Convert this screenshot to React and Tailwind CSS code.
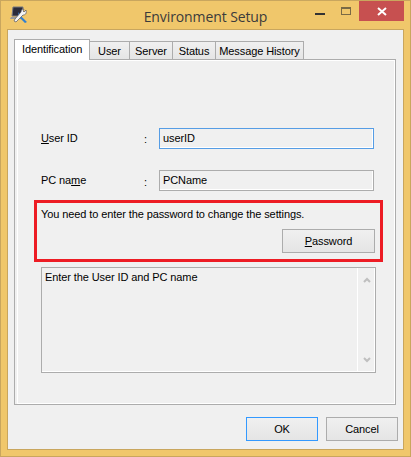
const tabs = [
  { label: 'User', width: 'w-[40px]' },
  { label: 'Server', width: 'w-[43px]' },
  { label: 'Status', width: 'w-[43px]' },
  { label: 'Message History', width: 'w-[88px]' },
];

const AppIcon = () => (
  <svg width="18" height="18" viewBox="0 0 18 18" className="mt-[5px] ml-[9px]">
    <path d="M3 1h10l-1 9H2z" fill="#2b2b3a" stroke="#77777f" strokeWidth="1" />
    <path d="M1 11h10l1 2H0z" fill="#9a9a9a" />
    <path d="M8 6l3 4 6 6-2 1-6-6z" fill="#2f7fd0" />
    <path d="M16 4l-2 2-1-1 1-2c-2 0-3 1-3 3l-6 7-1 2 2 1 7-7c2 0 4-1 3-5z" fill="#f4f4f4" stroke="#55555f" strokeWidth="0.7" />
  </svg>
);

const TitleBar = () => (
  <div className="grid grid-cols-[1fr_auto_1fr] h-[28px] shrink-0">
    <AppIcon />
    <div className="text-[14px] leading-[20px] pt-[6px] text-[#3b3b3b] font-['Open_Sans',sans-serif]">
      Environment Setup
    </div>
    <div className="flex justify-end items-start">
      <div className="w-[10px] h-[2px] mt-[12px] bg-[#333333]" />
      <div className="w-[10px] h-[8px] mt-[6px] ml-[16px] border border-[#7a6a45] border-t-2" />
      <div className="w-[45px] h-[20px] ml-[8px] mr-[6px] bg-[#C75050] flex items-center justify-center">
        <svg width="10" height="9" viewBox="0 0 10 9">
          <path d="M1 1l8 7M9 1L1 8" stroke="#ffffff" strokeWidth="2" />
        </svg>
      </div>
    </div>
  </div>
);

const Tabs = () => (
  <div className="flex items-end h-[20px] relative z-10">
    <div className="w-[76px] h-[21px] -mb-[1px] bg-white border border-b-0 border-[#ACACAC] pl-[7px] pt-[2px] leading-[14px]">
      Identification
    </div>
    {tabs.map((tab) => (
      <div
        key={tab.label}
        className={`${tab.width} h-[18px] border border-l-0 border-b-0 border-[#ACACAC] bg-gradient-to-b from-[#F0F0F0] to-[#E5E5E5] text-center pt-[2px] leading-[14px] whitespace-nowrap`}
      >
        {tab.label}
      </div>
    ))}
  </div>
);

const Field = ({ label, value, focused, colonClass }) => (
  <div className="flex items-center h-[21px]">
    <div className="w-[103px]">{label}</div>
    <div className={`w-[15px] ${colonClass}`}>:</div>
    <div
      className={`w-[215px] h-[21px] border ${focused ? 'border-[#569DE5]' : 'border-[#ACACAC]'} shadow-[inset_-1px_-1px_0_#ffffff] pl-[3px] leading-[18px]`}
    >
      {value}
    </div>
  </div>
);

const Chevron = ({ d }) => (
  <svg width="8" height="6" viewBox="0 0 8 6">
    <path d={d} fill="none" stroke="#BFBFBF" strokeWidth="2" />
  </svg>
);

export default function App() {
  return (
    <div className="w-[411px] h-[457px] bg-[#F0C76B] border border-[#C9A65E] flex flex-col text-[11px] tracking-[-0.1px] text-black font-['Liberation_Sans',sans-serif]">
      <TitleBar />
      <div className="ml-[6px] mr-[6px] mb-[6px] flex-1 border border-[#C9A65E] bg-[#F0F0F0] flex flex-col pl-[6px] pr-[7px] pt-[9px]">
        <Tabs />
        <div className="h-[346px] border border-[#ACACAC] pl-[2px]">
          <div className="h-full border border-white pl-[23px] pt-[67px]">
            <Field
              label={<><u>U</u>ser ID</>}
              value="userID"
              focused
              colonClass="mt-[1px]"
            />
            <div className="mt-[21px]">
              <Field
                label={<>PC na<u>m</u>e</>}
                value="PCName"
                colonClass="mt-[4px]"
              />
            </div>
            <div className="-ml-[7px] mt-[9px] w-[349px] h-[62px] border-[3px] border-[#ED1C24] flex flex-col pl-[4px] pr-[5px] pt-[4px]">
              <div className="leading-[14px]">You need to enter the password to change the settings.</div>
              <button className="self-end mt-[8px] w-[93px] h-[24px] border border-[#ACACAC] bg-gradient-to-b from-[#F0F0F0] to-[#E5E5E5]">
                <u>P</u>assword
              </button>
            </div>
            <div className="mt-[5px] w-[335px] h-[106px] border border-[#ACACAC] flex shadow-[inset_-1px_-1px_0_#ffffff]">
              <div className="flex-1 pl-[3px] pt-[2px] leading-[14px]">Enter the User ID and PC name</div>
              <div className="w-[18px] border-l border-white flex flex-col items-center justify-between py-[9px]">
                <Chevron d="M1 5l3-3 3 3" />
                <Chevron d="M1 1l3 3 3-3" />
              </div>
            </div>
          </div>
        </div>
        <div className="flex justify-end gap-[8px] mt-[12px] mr-[-2px]">
          <button className="w-[72px] h-[24px] border border-[#3399FF] bg-gradient-to-b from-[#F0F0F0] to-[#E5E5E5]">OK</button>
          <button className="w-[72px] h-[24px] border border-[#ACACAC] bg-gradient-to-b from-[#F0F0F0] to-[#E5E5E5]">Cancel</button>
        </div>
      </div>
    </div>
  );
}
